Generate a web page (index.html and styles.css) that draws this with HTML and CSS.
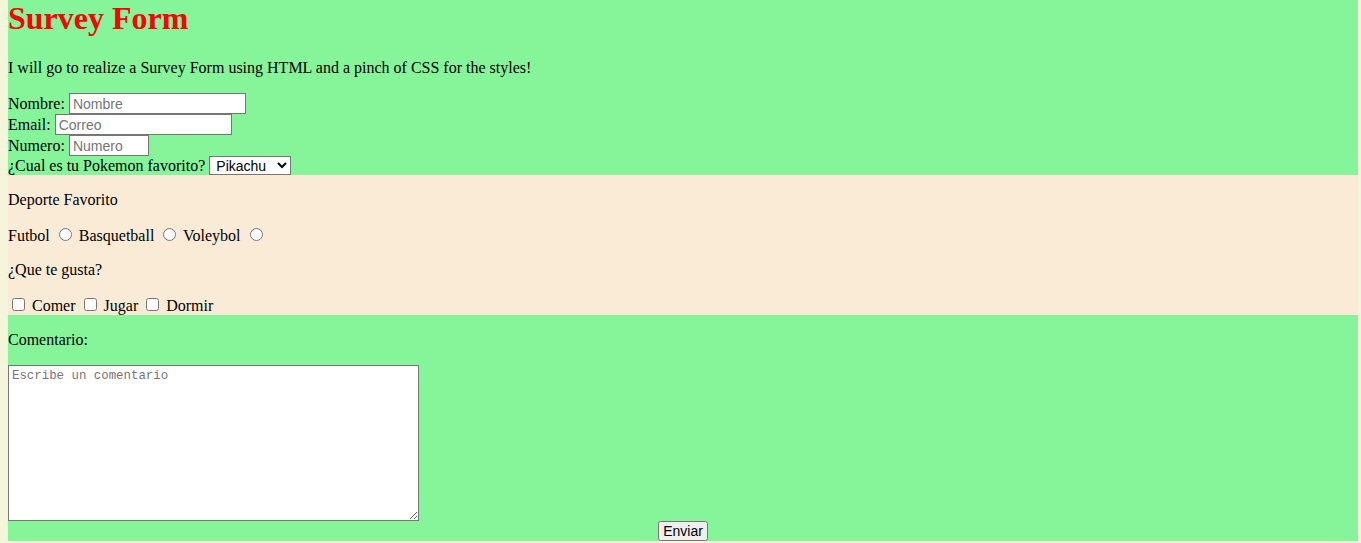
FILE: index.html
```html
<!DOCTYPE html>
<html lang="es">
<head>
<meta charset="utf-8">
<title>Survey Form</title>
<link rel="stylesheet" href="styles.css">
</head>
<body>
<div class="section green">
  <h1 class="title">Survey Form</h1>
  <p class="lead">I will go to realize a Survey Form using HTML and a pinch of CSS for the styles!</p>
  <div class="fields">
    <label>Nombre:</label> <input class="text-input" type="text" placeholder="Nombre"><br>
    <label>Email:</label> <input class="text-input" type="email" placeholder="Correo"><br>
    <label>Numero:</label> <input class="text-input num" type="text" placeholder="Numero"><br>
    <label>¿Cual es tu Pokemon favorito?</label> <select class="pick"><option>Pikachu</option><option>Charmander</option><option>Bulbasaur</option></select>
  </div>
</div>
<div class="section beige">
  <p class="line">Deporte Favorito</p>
  <p class="line">Futbol <input class="radio" type="radio" name="d"> Basquetball <input class="radio" type="radio" name="d"> Voleybol <input class="radio" type="radio" name="d"></p>
  <p class="line">¿Que te gusta?</p>
  <div class="checks"><input class="check" type="checkbox"> Comer <input class="check" type="checkbox"> Jugar <input class="check" type="checkbox"> Dormir</div>
</div>
<div class="section green">
  <p class="line">Comentario:</p>
  <textarea class="comment" placeholder="Escribe un comentario"></textarea>
  <div class="submit-row"><button class="send" type="submit">Enviar</button></div>
</div>
</body>
</html>
```

FILE: styles.css
```css
html {
  background: #f5f5dc;
}
body {
  margin: 0 3px 0 8px;
  font-family: "Liberation Serif", "Times New Roman", serif;
  font-size: 16px;
  color: #000;
}
.section {
  display: flow-root;
}
.green {
  background: #86f59a;
}
.beige {
  background: #faebd7;
}
.title {
  margin: 0 0 22.44px;
  font-size: 32px;
  font-weight: bold;
  color: #ff0000;
}
.lead,
.line {
  margin: 16px 0;
}
.title + .lead {
  margin-top: 0;
}
.text-input {
  font-family: "Liberation Sans", Arial, sans-serif;
  font-size: 14px;
  width: 177px;
  height: 21px;
  box-sizing: border-box;
  padding: 0 3px;
  border: 1px solid #767676;
  border-radius: 0;
  margin: 0;
  background: #fff;
  vertical-align: baseline;
}
.text-input.num {
  width: 80px;
}
.text-input::placeholder {
  color: #757575;
}
.pick {
  font-family: "Liberation Sans", Arial, sans-serif;
  font-size: 14px;
  width: 82px;
  height: 19px;
  margin: 0 0 -1px;
  padding: 0 0 0 2px;
  border: 1px solid #767676;
  border-radius: 0;
  background: #fff;
  color: #000;
}
.radio {
  margin: 3px 3px 0 5px;
}
.check {
  margin: 3px 3px 3px 4px;
}
.comment {
  display: block;
  box-sizing: border-box;
  width: 411px;
  height: 156px;
  margin: 0;
  padding: 3px;
  border: 1px solid #767676;
  font-family: "Liberation Mono", "Courier New", monospace;
  font-size: 12.4px;
  resize: both;
  background: #fff;
}
.comment::placeholder {
  color: #757575;
}
.submit-row {
  text-align: center;
}
.send {
  font-family: "Liberation Sans", Arial, sans-serif;
  font-size: 14px;
  margin: 0;
  padding: 0;
  width: 50px;
  height: 20px;
  box-sizing: border-box;
  color: #000;
}
```
